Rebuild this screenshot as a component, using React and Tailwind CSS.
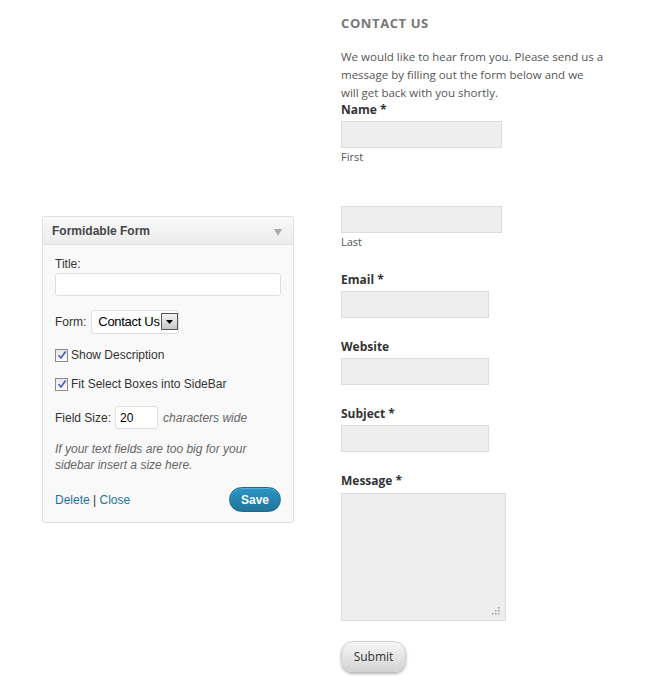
import React from 'react';

const rightFont = { fontFamily: '"Open Sans", "DejaVu Sans", sans-serif' };
const wpFont = { fontFamily: '"Liberation Sans", Arial, sans-serif' };

// Classic WP-style checkbox, checked
const Check = () => (
    <span className="inline-flex w-[13px] h-[13px] border border-[#8a8a8a] bg-gradient-to-b from-[#e6e6e6] to-[#fcfcfc] items-center justify-center mr-[3px] shrink-0">
        <svg width="10" height="10" viewBox="0 0 10 10">
            <path d="M1.5 5.2 L4 8 L8.6 1.6" fill="none" stroke="#4a5fb8" strokeWidth="1.7" />
        </svg>
    </span>
);

const FieldLabel = ({ children }) => (
    <div className="text-[12px] font-bold text-[#333] leading-[16px]">{children}</div>
);

const TextBox = ({ w = 'w-[161px]' }) => (
    <div className={`${w} h-[27px] bg-[#eeeeee] border border-[#dcdcdc]`} />
);

const SubLabel = ({ children }) => (
    <div className="text-[11px] text-[#555] leading-[18px]">{children}</div>
);

const Widget = () => (
    <div className="w-[252px] border border-[#dfdfdf] rounded-[3px] bg-[#f9f9f9]" style={wpFont}>
        {/* Header */}
        <div className="h-[28px] flex items-center justify-between px-[9px] bg-gradient-to-b from-[#f9f9f9] to-[#ececec] border-b border-[#dfdfdf] rounded-t-[3px]">
            <span className="text-[12px] font-bold text-[#464646]">Formidable Form</span>
            <svg width="8" height="8" viewBox="0 0 8 8" className="mr-[2px] mt-[2px]">
                <path d="M0 1 L8 1 L4 8 Z" fill="#aaa" />
            </svg>
        </div>

        {/* Body */}
        <div className="px-[12px] pt-[11px] pb-[10px] text-[12px] leading-[16px] text-[#333]">
            <div>Title:</div>
            <div className="mt-[1px] h-[23px] w-[226px] bg-white border border-[#dfdfdf] rounded-[3px]" />

            <div className="mt-[14px] h-[23px] flex items-center">
                <span>Form:</span>
                <div className="ml-[5px] h-[24px] w-[88px] bg-white border border-[#dfdfdf] rounded-[3px] flex items-center pl-[6px] overflow-hidden whitespace-nowrap">
                    <span className="text-[13px] text-black tracking-[-0.3px]">Contact Us</span>
                    <span className="ml-[1px] w-[17px] h-[17px] shrink-0 border border-[#555] bg-gradient-to-b from-[#f4f4f4] to-[#c8c8c8] flex items-center justify-center">
                        <svg width="7" height="4" viewBox="0 0 7 4">
                            <path d="M0 0 L7 0 L3.5 4 Z" fill="#000" />
                        </svg>
                    </span>
                </div>
            </div>

            <div className="mt-[15px] h-[14px] flex items-center">
                <Check />
                <span>Show Description</span>
            </div>
            <div className="mt-[15px] h-[14px] flex items-center">
                <Check />
                <span>Fit Select Boxes into SideBar</span>
            </div>

            <div className="mt-[15px] h-[23px] flex items-center">
                <span>Field Size:</span>
                <div className="ml-[4px] h-[23px] w-[43px] bg-white border border-[#dfdfdf] rounded-[3px] flex items-center pl-[4px] text-[12px] text-black">20</div>
                <span className="ml-[5px] italic text-[#666]">characters wide</span>
            </div>

            <p className="mt-[12px] italic text-[#666] leading-[16px]">
                If your text fields are too big for your<br />sidebar insert a size here.
            </p>

            <div className="mt-[14px] h-[25px] flex items-center justify-between">
                <span className="text-[#21759b]">
                    Delete <span className="text-[#333]">|</span> Close
                </span>
                <button className="h-[25px] w-[52px] rounded-full text-white text-[12px] font-bold border border-[#1e6a8d] bg-gradient-to-b from-[#2a95c5] to-[#21759b] shadow-[inset_0_1px_0_rgba(120,200,230,0.5)]">
                    Save
                </button>
            </div>
        </div>
    </div>
);

const ContactForm = () => (
    <div className="w-[280px] pt-[15px]" style={rightFont}>
        <h2 className="text-[13px] font-bold tracking-[0.6px] text-[#777] leading-[16px]">CONTACT US</h2>
        <p className="mt-[17px] text-[11.5px] text-[#555] leading-[18px] whitespace-nowrap">
            We would like to hear from you. Please send us a<br />
            message by filling out the form below and we<br />
            will get back with you shortly.
        </p>

        <FieldLabel>Name *</FieldLabel>
        <div className="mt-[3px]"><TextBox /></div>
        <SubLabel>First</SubLabel>

        <div className="mt-[40px]"><TextBox /></div>
        <SubLabel>Last</SubLabel>

        <div className="mt-[21px]"><FieldLabel>Email *</FieldLabel></div>
        <div className="mt-[3px]"><TextBox w="w-[148px]" /></div>

        <div className="mt-[21px]"><FieldLabel>Website</FieldLabel></div>
        <div className="mt-[3px]"><TextBox w="w-[148px]" /></div>

        <div className="mt-[21px]"><FieldLabel>Subject *</FieldLabel></div>
        <div className="mt-[3px]"><TextBox w="w-[148px]" /></div>

        <div className="mt-[21px]"><FieldLabel>Message *</FieldLabel></div>
        <div className="mt-[4px] w-[165px] h-[128px] bg-[#eeeeee] border border-[#dcdcdc] relative">
            <svg width="10" height="10" viewBox="0 0 10 10" className="absolute right-[4px] bottom-[4px]">
                <rect x="7" y="1" width="1.5" height="1.5" fill="#999" />
                <rect x="4" y="4" width="1.5" height="1.5" fill="#999" />
                <rect x="7" y="4" width="1.5" height="1.5" fill="#999" />
                <rect x="1" y="7" width="1.5" height="1.5" fill="#999" />
                <rect x="4" y="7" width="1.5" height="1.5" fill="#999" />
                <rect x="7" y="7" width="1.5" height="1.5" fill="#999" />
            </svg>
        </div>

        <button className="mt-[20px] w-[65px] h-[31px] rounded-[12px] text-[12px] text-[#333] bg-gradient-to-b from-[#f6f6f6] to-[#d4d4d4] border border-[#d0d0d0] shadow-[0_2px_3px_rgba(0,0,0,0.3)]">
            Submit
        </button>
    </div>
);

export default function App() {
    return (
        <div className="w-[650px] h-[691px] bg-white flex items-start">
            <div className="ml-[42px] mt-[216px]">
                <Widget />
            </div>
            <div className="ml-[47px]">
                <ContactForm />
            </div>
        </div>
    );
}
